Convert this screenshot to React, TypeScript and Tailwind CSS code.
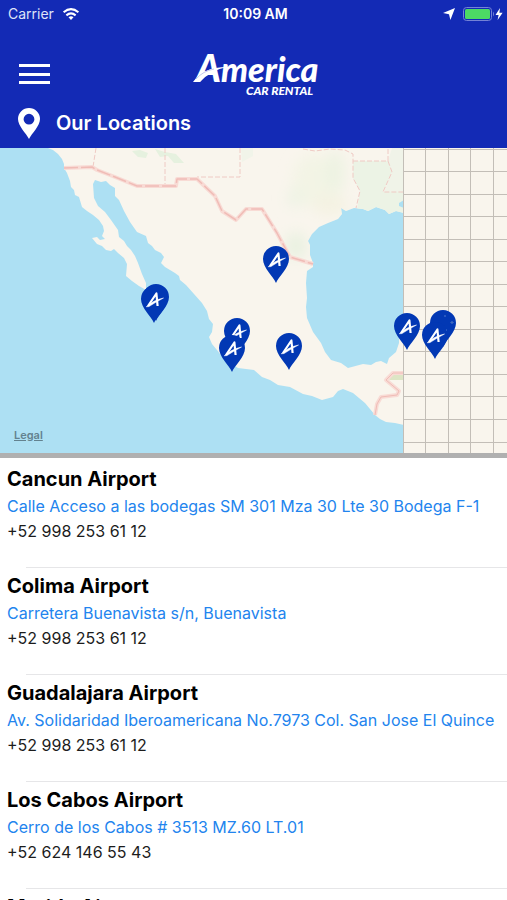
import clsx from "clsx";

type Location = {
	name: string;
	address: string;
	phone: string;
};

const locations: Location[] = [
	{
		name: "Cancun Airport",
		address: "Calle Acceso a las bodegas SM 301 Mza 30 Lte 30 Bodega F-1",
		phone: "+52 998 253 61 12",
	},
	{
		name: "Colima Airport",
		address: "Carretera Buenavista s/n, Buenavista",
		phone: "+52 998 253 61 12",
	},
	{
		name: "Guadalajara Airport",
		address: "Av. Solidaridad Iberoamericana No.7973 Col. San Jose El Quince",
		phone: "+52 998 253 61 12",
	},
	{
		name: "Los Cabos Airport",
		address: "Cerro de los Cabos # 3513 MZ.60 LT.01",
		phone: "+52 624 146 55 43",
	},
	{
		name: "Merida Airport",
		address: "",
		phone: "",
	},
];

// tip of each pin, back to front
const pins = [
	{ x: 276, y: 283 },
	{ x: 156, y: 321, blank: true },
	{ x: 154, y: 323 },
	{ x: 237, y: 355 },
	{ x: 232, y: 372 },
	{ x: 289, y: 370 },
	{ x: 407, y: 350 },
	{ x: 443, y: 347, blank: true },
	{ x: 435, y: 359 },
];

const gridX = [404, 426, 449, 471, 494];
const gridY = [
	149, 171, 194, 216, 239, 261, 284, 306, 329, 351, 374, 396, 419, 442,
];

const land =
	"M48 148L53 150L58 154L62 159L64 164L64 168L67 173L70 181L71 187L74 190L75 195L79 197L82 207L87 211L93 215L99 220L103 226L104 231L102 236L105 239L100 240L97 237L92 238L97 244L102 246L106 250L111 251L114 249L118 253L124 258L127 264L126 276L132 281L139 286L146 290L146 283L142 274L138 263L135 256L131 250L127 246L124 241L119 237L118 230L111 220L105 212L98 206L94 198L93 184L95 180L101 182L106 181L110 185L115 188L115 196L119 200L124 211L130 222L137 232L146 236L148 243L152 246L155 250L161 253L164 257L161 263L165 267L175 273L179 276L180 280L186 285L194 294L202 303L207 311L209 319L213 324L212 332L209 337L212 344L217 350L224 359L238 368L254 370L262 377L270 380L278 385L290 387L303 394L312 396L322 400L333 397L338 391L343 389L353 393L365 403L375 415L380 419L386 422L395 423L404 425V320L399 330L399 343L396 352L389 358L387 364L381 361L376 362L371 365L363 364L348 368L341 363L331 360L325 352L321 343L313 332L307 318L306 307L307 298L306 283L307 271L313 267L313 263L310 255L310 245L308 241L312 234L319 227L328 223L338 219L342 214L341 208L346 211L354 208L363 209L368 211L376 207L385 210L389 214L396 211L404 213V148Z";

const border =
	"M64 168L92 167L97 170L115 177L137 186L176 186L177 179L197 179L215 196L222 211L236 220L246 209L262 209L277 233L290 257L313 264";

const MapPin = ({ x, y, blank }: { x: number; y: number; blank?: boolean }) => (
	<g transform={`translate(${x} ${y})`}>
		<path
			d="M0 0C-3 -7 -13 -15 -13 -24A13 13 0 0 1 13 -24C13 -15 3 -7 0 0Z"
			fill="#0238b4"
		/>
		{!blank && (
			<g fill="none" stroke="#fff" strokeLinejoin="round">
				<path d="M-6 -17L2.4 -29.5L3.6 -17" strokeWidth="2.2" />
				<path
					d="M-7.8 -16.2Q-1 -22.8 9.5 -25Q1 -20.5 -5 -16.4Z"
					fill="#fff"
					strokeWidth="0.5"
				/>
			</g>
		)}
	</g>
);

const LocationsMap = () => (
	<section
		aria-label="Map"
		className="relative h-[310px] border-b-5 border-[#b0b0b0] bg-[#ade0f3]">
		<svg
			viewBox="0 148 507 305"
			preserveAspectRatio="xMidYMid slice"
			className="block size-full">
			<defs>
				<filter id="soft" x="-50%" y="-50%" width="200%" height="200%">
					<feGaussianBlur stdDeviation="7" />
				</filter>
				<clipPath id="land">
					<path d={land} />
				</clipPath>
			</defs>
			<rect y="148" width="507" height="305" fill="#ade0f3" />
			<path d={land} fill="#f9f5ed" />
			<g clipPath="url(#land)">
				<g filter="url(#soft)">
					<ellipse cx="313" cy="180" rx="20" ry="26" fill="#f3f4e5" />
					<ellipse cx="330" cy="205" rx="18" ry="10" fill="#f4f2e2" />
					<ellipse cx="335" cy="172" rx="10" ry="22" fill="#edf3e2" />
					<ellipse cx="295" cy="198" rx="8" ry="10" fill="#edf3e4" />
					<ellipse cx="296" cy="246" rx="10" ry="14" fill="#e8f1e0" />
				</g>
				<path
					d="M353 161H388L392 172L383 192H404V216H356L360 191L353 178Z"
					fill="#ecf3e5"
				/>
				<path d="M392 148H404V192H384L392 172L388 161Z" fill="#f0f3e8" />
				<path
					d="M132 151L140 150L148 153L146 158L138 157ZM155 149L165 152L176 154L184 163L174 163L168 156L160 157Z"
					fill="#e6f1df"
				/>
				<path d="M241 148H253V156L242 162Z" fill="#f1f4e9" />
				<path d="M393 373H404V380H389Z" fill="#dde5c5" />
			</g>
			<path d="M399 203L404 200V208L399 206Z" fill="#ade0f3" />
			<g fill="none" strokeLinejoin="round">
				<g stroke="#efcac4" strokeDasharray="5 2">
					<path d="M96 148L93 167M165 148V186M240 148V177H197" />
					<path d="M303 149L315 151L330 149L345 150L353 154V178L360 191L356 208M353 161H388L392 172L383 192H404M388 161V148" />
				</g>
				<path d={border} stroke="#f8dbd5" strokeWidth="4" />
				<path
					d={border}
					stroke="#f0bcb6"
					strokeWidth="1.5"
					strokeDasharray="14 3"
				/>
				<path
					d="M404 373H393L386 380L399 391L397 395L381 397L377 404L375 415"
					stroke="#f8dbd5"
					strokeWidth="4"
				/>
				<path
					d="M404 373H393L386 380L399 391L397 395L381 397L377 404L375 415"
					stroke="#f0bcb6"
				/>
			</g>
			{/* tiles that have not loaded */}
			<rect x="404" y="148" width="103" height="305" fill="#f9f5ed" />
			<g fill="#c3beb7">
				{gridX.map((x) => (
					<rect key={x} x={x - 1} y="148" width="1" height="305" />
				))}
				{gridY.map((y) => (
					<rect key={y} x="404" y={y} width="103" height="1" />
				))}
			</g>
			{pins.map((pin) => (
				<MapPin key={`${pin.x}-${pin.y}`} {...pin} />
			))}
			<path
				d="M444 316h2M451 322h2v1h-2zM446 330h1"
				stroke="#4d78cf"
				strokeWidth="1"
			/>
		</svg>
		<a
			href="#legal"
			className="absolute bottom-2.5 left-3.5 text-[11px] font-semibold text-[#63828f] underline">
			Legal
		</a>
	</section>
);

const StatusBar = () => (
	<div className="grid h-7 grid-cols-3 items-center pr-1 pl-2 text-sm">
		<div className="flex items-center gap-2 text-[#dfe3f8]">
			<span>Carrier</span>
			<svg viewBox="0 0 18 13" className="h-3 w-[18px]">
				<g fill="none" stroke="#fff" strokeWidth="2.2">
					<path d="M1 4.6Q9 -2.2 17 4.6" />
					<path d="M4 8Q9 3.6 14 8" />
				</g>
				<path d="M6.3 10Q9 7.8 11.7 10L9 13Z" fill="#fff" />
			</svg>
		</div>
		<span className="text-center font-semibold whitespace-nowrap">
			10:09 AM
		</span>
		<div className="flex items-center justify-end">
			<svg viewBox="0 0 12 12" className="mr-2 size-3">
				<path d="M12 0L7.4 12L6 6.2L0 5Z" fill="#fff" />
			</svg>
			<svg viewBox="0 0 32 14" className="h-3.5 w-8">
				<rect
					x="0.5"
					y="0.5"
					width="28"
					height="13"
					rx="3"
					fill="none"
					stroke="#7482d6"
				/>
				<rect x="2" y="2" width="25" height="10" rx="1.5" fill="#4cd964" />
				<path d="M30 4.5Q32 7 30 9.5Z" fill="#7482d6" />
			</svg>
			<svg viewBox="0 0 8 12" className="h-3 w-2">
				<path d="M5 0L0.5 7H3.6L2.6 12L7.6 4.8H4.4Z" fill="#fff" />
			</svg>
		</div>
	</div>
);

const Logo = () => (
	<svg
		viewBox="0 0 128 44"
		role="img"
		aria-label="America Car Rental"
		className="h-11 w-32 overflow-visible">
		<g
			fill="#fff"
			fontWeight="900"
			fontStyle="italic"
			className="font-[Lato,sans-serif]">
			<text x="5" y="30" fontSize="38">
				A<tspan fontSize="34">merica</tspan>
			</text>
			<text x="55" y="43" fontSize="12">
				CAR RENTAL
			</text>
		</g>
		<path d="M2 30Q12 15 36 15Q20 18 9 30Z" fill="#fff" />
		<path d="M5 27Q12 19 23 17" fill="none" stroke="#c3c9ee" />
	</svg>
);

const Header = () => (
	<header className="bg-[#132ab5] text-white">
		<StatusBar />
		<div className="grid grid-cols-[1fr_auto_1fr] items-center pt-6 pl-[19px]">
			<button type="button" aria-label="Menu" className="w-fit">
				<svg viewBox="0 0 31 22" className="h-[22px] w-[31px]">
					<path d="M0 1h31v3H0zM0 10h31v3H0zM0 18h31v3H0z" fill="#fff" />
				</svg>
			</button>
			<div className="pr-4">
				<Logo />
			</div>
		</div>
		<div className="flex h-[52px] items-center gap-4 pt-0.5 pl-[18px]">
			<svg viewBox="0 0 22 31" className="h-[31px] w-[22px]">
				<path
					d="M11 0A11 11 0 0 0 0 11C0 18 8 25 11 31C14 25 22 18 22 11A11 11 0 0 0 11 0ZM11 5.8A5.4 5.4 0 1 1 11 16.6A5.4 5.4 0 1 1 11 5.8Z"
					fill="#fff"
				/>
			</svg>
			<h1 className="text-xl font-semibold">Our Locations</h1>
		</div>
	</header>
);

const LocationItem = ({ name, address, phone }: Location) => (
	<li>
		<div className="flex h-[106px] flex-col px-[7px] pt-1">
			<h2 className="text-xl leading-7 font-bold text-black">{name}</h2>
			{address && (
				<a
					href={`#${encodeURIComponent(address)}`}
					className="truncate text-base leading-[26px] text-[#2284ee]">
					{address}
				</a>
			)}
			{phone && (
				<span className="text-base leading-6 text-[#1c1c1c]">{phone}</span>
			)}
		</div>
		<div className="ml-[26px] h-px bg-[#e6e6e8]" />
	</li>
);

const App = () => {
	return (
		<div
			className={clsx(
				"h-screen overflow-hidden bg-white",
				"font-[Inter,'Liberation_Sans',sans-serif]",
			)}>
			<Header />
			<LocationsMap />
			<ul className="pt-[3px]">
				{locations.map((location) => (
					<LocationItem key={location.name} {...location} />
				))}
			</ul>
		</div>
	);
};

export default App;
